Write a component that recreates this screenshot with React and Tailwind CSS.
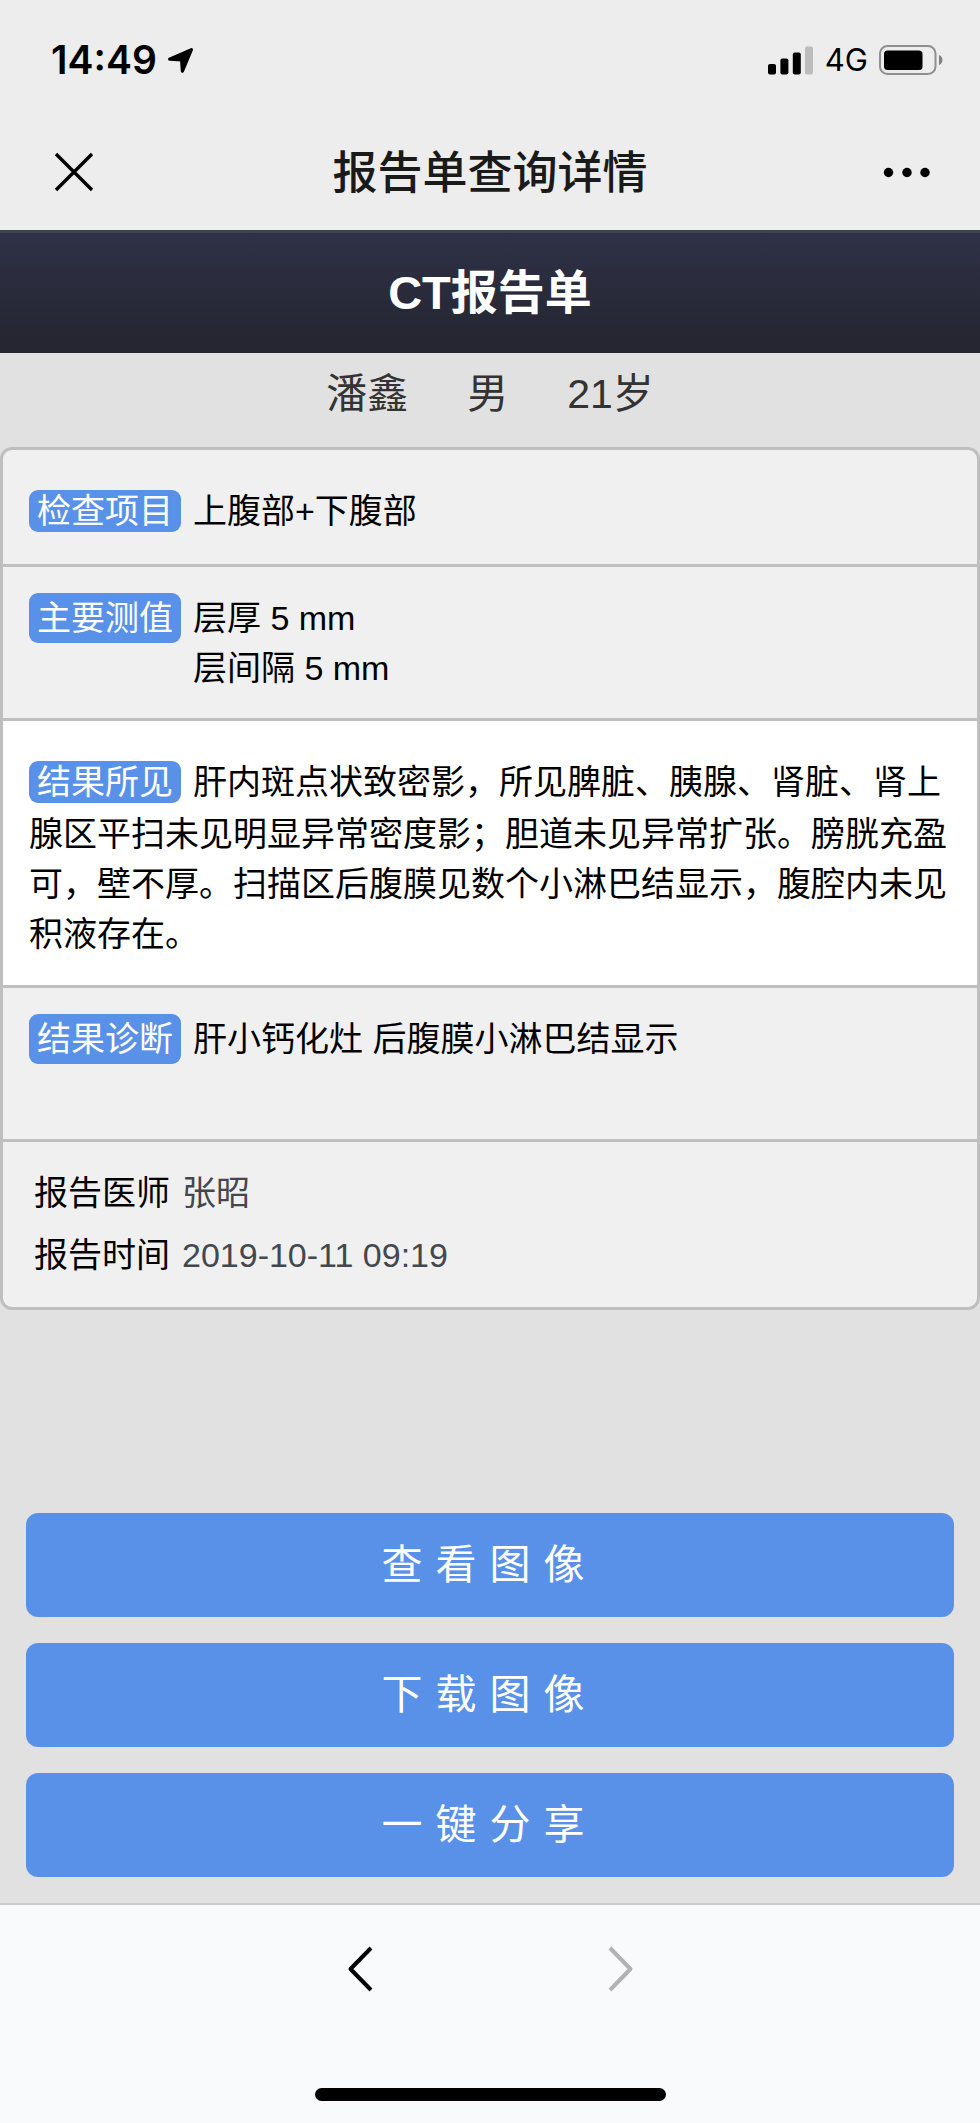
const fontStack = "font-['Liberation_Sans','Noto_Sans_CJK_SC',sans-serif]";

const StatusBar = () => {
  return (
    <div className="flex items-center justify-between pl-[51px] pr-[35px] pt-[38px] font-['Inter',sans-serif] text-black">
      <div className="flex items-center gap-[10px]">
        <span className="text-[39px] leading-[44px] font-semibold">14:49</span>
        <svg width="27" height="27" viewBox="0 0 27 27" aria-hidden="true">
          <path
            d="M24.4 2.6 15.4 24.2 14.6 12.8 2.6 12.2Z"
            fill="#000"
            stroke="#000"
            strokeWidth="3.2"
            strokeLinejoin="round"
          />
        </svg>
      </div>

      <div className="flex items-center gap-[11px]">
        <svg width="46" height="30" viewBox="0 0 46 30" aria-hidden="true">
          <rect x="0" y="19" width="8" height="10.5" rx="2" />
          <rect x="12.4" y="13.5" width="8" height="16" rx="2" />
          <rect x="24.8" y="7.5" width="8" height="22" rx="2" />
          <rect x="37" y="1.5" width="8" height="28" rx="2" fill="#bcbcbc" />
        </svg>
        <span className="text-[31px] leading-[44px]">4G</span>
        <svg width="66" height="30" viewBox="0 0 66 30" aria-hidden="true">
          <rect x="1" y="1" width="55.5" height="28" rx="7.5" fill="none" stroke="#909090" strokeWidth="2" />
          <rect x="5" y="5.5" width="38.5" height="19.5" rx="3.5" />
          <path d="M60 10c4.6 1.4 4.6 8.6 0 10z" fill="#808080" />
        </svg>
      </div>
    </div>
  );
};

const NavBar = () => {
  return (
    <div className="grid grid-cols-[1fr_auto_1fr] items-center px-[50px] pt-[58px] pb-[26px]">
      <button type="button" aria-label="关闭" className="justify-self-start">
        <svg width="48" height="48" viewBox="0 0 48 48" fill="none" stroke="#000" strokeWidth="3.4">
          <path d="M6 6 42 42M42 6 6 42" />
        </svg>
      </button>

      <h1 className="pt-1 text-[45px] leading-[60px] font-medium text-[#1a1a1a]">报告单查询详情</h1>

      <button type="button" aria-label="更多" className="justify-self-end">
        <svg width="48" height="48" viewBox="0 0 48 48">
          <circle cx="6.5" cy="24.5" r="4.7" />
          <circle cx="25" cy="24.5" r="4.7" />
          <circle cx="43" cy="24.5" r="4.7" />
        </svg>
      </button>
    </div>
  );
};

const Tag = ({ children, inline }) => {
  return (
    <span
      className={`mr-3 shrink-0 rounded-[9px] bg-[#5991e8] px-2 text-white ${
        inline ? "mb-[6px] inline-block leading-[42px]" : "leading-[50px]"
      }`}
    >
      {children}
    </span>
  );
};

const actions = ["查 看 图 像", "下 载 图 像", "一 键 分 享"];

const App = () => {
  return (
    <div className={`flex min-h-screen flex-col bg-[#e1e1e1] ${fontStack}`}>
      <header className="bg-[#ededed]">
        <StatusBar />
        <NavBar />
      </header>

      <main className="flex-1">
        {/* Report title */}
        <h2 className="border-t-[3px] border-[#3e444f] bg-linear-to-b from-[#2f3147] to-[#24252f] py-[30px] text-center text-[47px] leading-[60px] font-bold text-white">
          CT报告单
        </h2>

        {/* Patient */}
        <div className="flex justify-center gap-[59px] pt-[11px] pb-[23px] text-[41px] leading-[60px] text-[#333333]">
          <span>潘鑫</span>
          <span>男</span>
          <span>21岁</span>
        </div>

        {/* Report body */}
        <div className="divide-y-[3px] divide-[#bfbfbf] overflow-hidden rounded-xl border-[3px] border-[#bfbfbf] bg-[#f0f0f0] text-[34px] leading-[50px] text-black">
          <p className="px-[26px] pt-9 pb-[26px]">
            <Tag inline>检查项目</Tag>
            上腹部+下腹部
          </p>

          <div className="flex items-start px-[26px] pt-[26px] pb-[25px]">
            <Tag>主要测值</Tag>
            <div>
              <p>层厚 5 mm</p>
              <p>层间隔 5 mm</p>
            </div>
          </div>

          <p className="bg-white px-[26px] pt-9 pb-[26px]">
            <Tag inline>结果所见</Tag>
            肝内斑点状致密影，所见脾脏、胰腺、肾脏、肾上腺区平扫未见明显异常密度影；胆道未见异常扩张。膀胱充盈可，壁不厚。扫描区后腹膜见数个小淋巴结显示，腹腔内未见积液存在。
          </p>

          <div className="flex items-start px-[26px] pt-[26px] pb-[75px]">
            <Tag>结果诊断</Tag>
            <p>肝小钙化灶 后腹膜小淋巴结显示</p>
          </div>

          <dl className="grid grid-cols-[auto_1fr] gap-x-3 px-[31px] pt-5 pb-[21px] leading-[62px]">
            <dt>报告医师</dt>
            <dd className="text-[#43474e]">张昭</dd>
            <dt>报告时间</dt>
            <dd className="text-[#43474e]">2019-10-11 09:19</dd>
          </dl>
        </div>

        {/* Actions */}
        <div className="flex flex-col gap-[26px] px-[26px] pt-[203px] pb-[25px]">
          {actions.map((label) => (
            <button
              key={label}
              type="button"
              className="rounded-xl bg-[#5991e8] pt-[22px] pr-[14px] pb-[22px] font-['DejaVu_Sans','Noto_Sans_CJK_SC',sans-serif] text-[41px] leading-[60px] text-white"
            >
              {label}
            </button>
          ))}
        </div>
      </main>

      {/* Browser toolbar */}
      <footer className="flex flex-col items-center border-t-2 border-[#cacaca] bg-[#f9fafc] pt-10 pb-[22px]">
        <div className="flex gap-[211px]">
          <button type="button" aria-label="后退">
            <svg width="48" height="48" viewBox="0 0 48 48" fill="none" stroke="#000" strokeWidth="4">
              <path d="M34 3 13.5 24 34 45" strokeLinejoin="round" />
            </svg>
          </button>
          <button type="button" aria-label="前进" disabled>
            <svg width="48" height="48" viewBox="0 0 48 48" fill="none" stroke="#b2b2b2" strokeWidth="4">
              <path d="M14 3 34.5 24 14 45" strokeLinejoin="round" />
            </svg>
          </button>
        </div>
        <div className="mt-[95px] h-[13px] w-[351px] rounded-full bg-black"></div>
      </footer>
    </div>
  );
};

export default App;
